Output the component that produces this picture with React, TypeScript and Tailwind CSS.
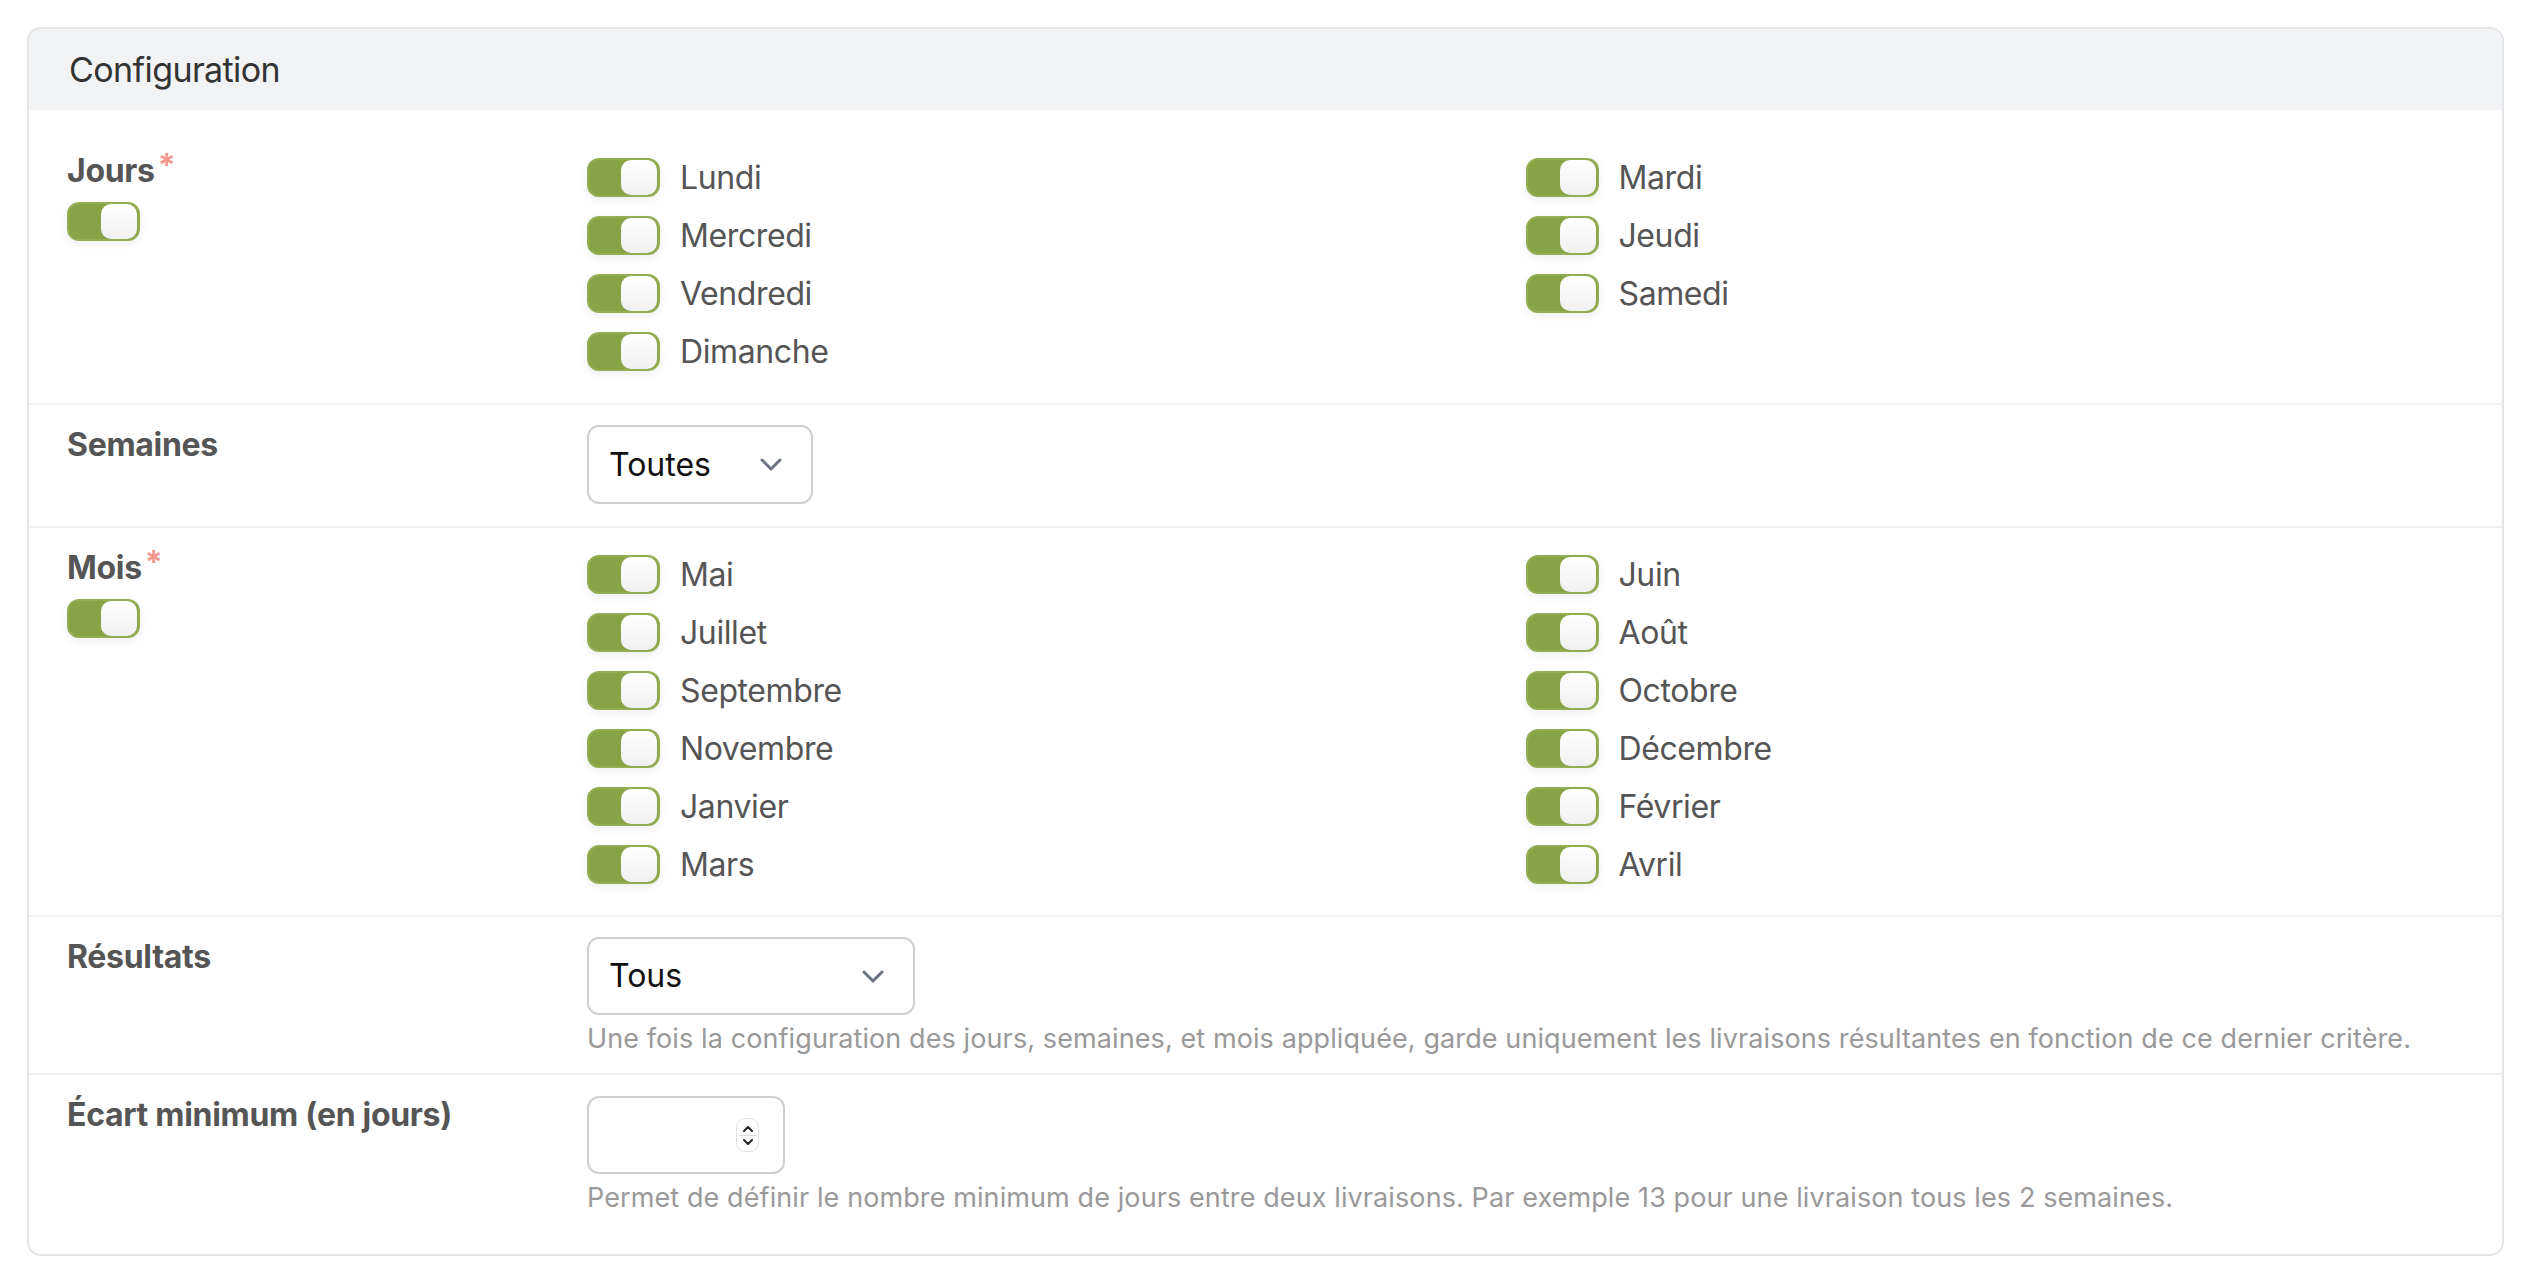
import { ReactNode } from "react"

const font = { fontFamily: "Inter, 'Noto Sans', sans-serif" }

function Toggle() {
  return (
    <div className="w-[73px] h-[39px] shrink-0 rounded-[12px] bg-[#88a246] border-2 border-[#93ad52] flex justify-end items-center pr-[1px] shadow-[0_3px_8px_rgba(0,0,0,0.07)]">
      <div className="w-[36px] h-[35px] rounded-[10px] bg-gradient-to-b from-white to-[#f0f0f0]" />
    </div>
  )
}

function Chevron() {
  return (
    <svg width="22" height="13" viewBox="0 0 22 13" fill="none" className="shrink-0">
      <path d="M2 2 L11 11 L20 2" stroke="#6b7280" strokeWidth="3" strokeLinecap="round" strokeLinejoin="round" />
    </svg>
  )
}

function Label({ text, required }: { text: string; required?: boolean }) {
  return (
    <div className="w-[520px] shrink-0">
      <div className="text-[32px] leading-[48px] font-bold text-[#555] tracking-[-0.3px]">
        {text}
        {required && <span className="text-[#f4978e] text-[32px] relative top-[-5px] ml-[3px]">*</span>}
      </div>
      {required && (
        <div className="mt-[7px]">
          <Toggle />
        </div>
      )}
    </div>
  )
}

function SwitchGrid({ items }: { items: string[] }) {
  return (
    <div className="grid grid-cols-2 gap-y-[19px] mt-[11px] mb-[10px]">
      {items.map((item) => (
        <div key={item} className="flex items-center gap-[20px] h-[39px]">
          <Toggle />
          <span className="text-[32px] text-[#555] tracking-[-0.4px]">{item}</span>
        </div>
      ))}
    </div>
  )
}

function Row({ children, first, pb }: { children: ReactNode; first?: boolean; pb: string }) {
  return (
    <div className={`flex px-[38px] pt-[16px] ${pb} ${first ? "" : "border-t-2 border-[#eff0f2]"}`}>{children}</div>
  )
}

function Help({ children }: { children: ReactNode }) {
  return <div className="mt-[4px] text-[27px] leading-[39px] text-[#999] tracking-[0.1px]">{children}</div>
}

export default function App() {
  const jours = ["Lundi", "Mardi", "Mercredi", "Jeudi", "Vendredi", "Samedi", "Dimanche"]
  const mois = [
    "Mai", "Juin", "Juillet", "Août", "Septembre", "Octobre",
    "Novembre", "Décembre", "Janvier", "Février", "Mars", "Avril",
  ]

  return (
    <div className="min-h-screen bg-white pt-[27px] pl-[27px]" style={font}>
      <div className="w-[2477px] border-2 border-[#e4e5e8] rounded-[14px] overflow-hidden">
        <div className="h-[81px] bg-[#f2f3f5] px-[40px] flex items-center text-[34px] text-[#333] tracking-[-0.6px]">
          Configuration
        </div>

        <div className="pt-[21px] pb-[20px]">
          <Row first pb="pb-[22px]">
            <Label text="Jours" required />
            <div className="flex-1">
              <SwitchGrid items={jours} />
            </div>
          </Row>

          <Row pb="pb-[22px]">
            <Label text="Semaines" />
            <div className="flex-1">
              <div className="mt-[4px] w-[226px] h-[79px] border-2 border-[#cfcfd1] rounded-[12px] flex items-center justify-between pl-[20px] pr-[29px] text-[32px] text-[#111]">
                <span>Toutes</span>
                <Chevron />
              </div>
            </div>
          </Row>

          <Row pb="pb-[21px]">
            <Label text="Mois" required />
            <div className="flex-1">
              <SwitchGrid items={mois} />
            </div>
          </Row>

          <Row pb="pb-[15px]">
            <Label text="Résultats" />
            <div className="flex-1">
              <div className="mt-[4px] w-[328px] h-[78px] border-2 border-[#cfcfd1] rounded-[12px] flex items-center justify-between pl-[20px] pr-[29px] text-[32px] text-[#111]">
                <span>Tous</span>
                <Chevron />
              </div>
              <Help>
                Une fois la configuration des jours, semaines, et mois appliquée, garde uniquement les livraisons résultantes en fonction de ce dernier critère.
              </Help>
            </div>
          </Row>

          <Row pb="pb-[17px]">
            <Label text="Écart minimum (en jours)" />
            <div className="flex-1">
              <div className="mt-[5px] w-[198px] h-[78px] border-2 border-[#cfcfd1] rounded-[12px] flex items-center justify-end pr-[24px]">
                <div className="w-[23px] h-[34px] rounded-[9px] border border-[#e2e2e4] flex flex-col items-center justify-center bg-white">
                  <svg width="12" height="8" viewBox="0 0 12 8" fill="none">
                    <path d="M2 6 L6 2 L10 6" stroke="#222" strokeWidth="2" strokeLinecap="round" strokeLinejoin="round" />
                  </svg>
                  <div className="w-[17px] h-px bg-[#dddde0] my-[2px]" />
                  <svg width="12" height="8" viewBox="0 0 12 8" fill="none">
                    <path d="M2 2 L6 6 L10 2" stroke="#222" strokeWidth="2" strokeLinecap="round" strokeLinejoin="round" />
                  </svg>
                </div>
              </div>
              <Help>
                Permet de définir le nombre minimum de jours entre deux livraisons. Par exemple 13 pour une livraison tous les 2 semaines.
              </Help>
            </div>
          </Row>
        </div>
      </div>
    </div>
  )
}
